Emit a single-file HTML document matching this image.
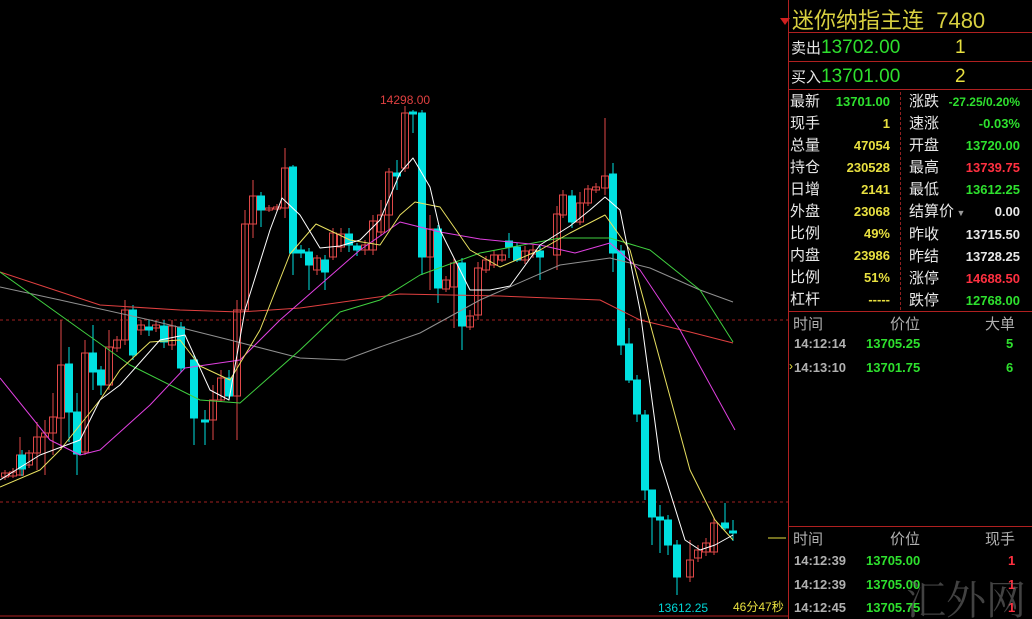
<!DOCTYPE html>
<html><head><meta charset="utf-8"><style>
html,body{margin:0;width:1032px;height:619px;background:#000;overflow:hidden}
body{position:relative;font-family:"Liberation Sans","Noto Sans CJK SC",sans-serif}
.t{position:absolute;white-space:nowrap}
.p{position:absolute;left:788px;right:0;border-left:1px solid #b02020}
.hl{position:absolute;left:789px;right:0;height:1px;background:#b02020}
.lab{color:#e8e8e8;font-size:15px}
.g{color:#2ee02e}.y{color:#e8e040}.r{color:#ff3040}.w{color:#e8e8e8}.gr{color:#b0b0b0}
.n{font-size:13px;font-weight:bold}
</style></head><body>
<svg width="788" height="619" style="position:absolute;left:0;top:0">
<line x1="0" y1="320" x2="788" y2="320" stroke="#a02020" stroke-dasharray="3,3"/>
<line x1="0" y1="502" x2="788" y2="502" stroke="#a02020" stroke-dasharray="3,3"/>
<line x1="0" y1="616" x2="788" y2="616" stroke="#b02020"/>
<line x1="768" y1="538" x2="786" y2="538" stroke="#e8e040"/>
<g stroke="#e04848" fill="none" stroke-width="1">
<path d="M5 470V480M13 468V478M20 437V476M29 450V468M37 422V470M45 420V475M53 393V455M61 320V450M85 340V455M109 330V390M117 336V352M125 300V345M141 320V335M156 320V332M172 320V350M213 385V440M221 370V402M237 300V440M245 210V312M253 180V238M269 205V212M277 204V211M285 148V218M317 255V275M333 228V260M341 228V252M365 240V255M373 215V255M381 200V236M389 168V230M405 106V172M430 215V290M446 276V292M454 258V328M470 310V330M478 262V320M486 256V273M494 250V268M502 250V262M525 246V264M533 245V258M557 206V270M563 190V218M580 192V225M588 185V206M596 183V193M605 118V195M690 540V582M698 545V562M706 538V556M714 518V555"/>
<rect x="1.5" y="473" width="7" height="4"/><rect x="9.5" y="472" width="7" height="4"/><rect x="16.5" y="455" width="7" height="20"/><rect x="25.5" y="453" width="7" height="12"/><rect x="33.5" y="437" width="7" height="16"/><rect x="41.5" y="433" width="7" height="4"/><rect x="49.5" y="417" width="7" height="16"/><rect x="57.5" y="365" width="7" height="53"/><rect x="81.5" y="353" width="7" height="99"/><rect x="105.5" y="347" width="7" height="38"/><rect x="113.5" y="340" width="7" height="8"/><rect x="121.5" y="310" width="7" height="30"/><rect x="137.5" y="325" width="7" height="5"/><rect x="152.5" y="325" width="7" height="3"/><rect x="168.5" y="326" width="7" height="19"/><rect x="209.5" y="400" width="7" height="20"/><rect x="217.5" y="378" width="7" height="22"/><rect x="233.5" y="310" width="7" height="86"/><rect x="241.5" y="224" width="7" height="86"/><rect x="249.5" y="196" width="7" height="28"/><rect x="265.5" y="208" width="7" height="2"/><rect x="273.5" y="207" width="7" height="2"/><rect x="281.5" y="168" width="7" height="40"/><rect x="313.5" y="258" width="7" height="12"/><rect x="329.5" y="233" width="7" height="24"/><rect x="337.5" y="234" width="7" height="13"/><rect x="361.5" y="245" width="7" height="5"/><rect x="369.5" y="221" width="7" height="29"/><rect x="377.5" y="215" width="7" height="17"/><rect x="385.5" y="172" width="7" height="43"/><rect x="401.5" y="113" width="7" height="55"/><rect x="426.5" y="229" width="7" height="28"/><rect x="442.5" y="280" width="7" height="9"/><rect x="450.5" y="263" width="7" height="24"/><rect x="466.5" y="316" width="7" height="11"/><rect x="474.5" y="268" width="7" height="47"/><rect x="482.5" y="260" width="7" height="10"/><rect x="490.5" y="255" width="7" height="10"/><rect x="498.5" y="255" width="7" height="5"/><rect x="521.5" y="251" width="7" height="9"/><rect x="529.5" y="250" width="7" height="4"/><rect x="553.5" y="214" width="7" height="41"/><rect x="559.5" y="195" width="7" height="20"/><rect x="576.5" y="203" width="7" height="19"/><rect x="584.5" y="189" width="7" height="14"/><rect x="592.5" y="187" width="7" height="3"/><rect x="601.5" y="176" width="7" height="12"/><rect x="686.5" y="560" width="7" height="17"/><rect x="694.5" y="550" width="7" height="8"/><rect x="702.5" y="543" width="7" height="9"/><rect x="710.5" y="523" width="7" height="29"/>
</g>
<g stroke="#00e0e0" fill="#00e0e0">
<path d="M22 450V476M69 347V442M77 393V475M93 325V390M101 366V395M133 305V360M149 320V336M164 320V348M181 322V372M194 355V445M205 410V445M229 370V400M261 192V227M293 165V275M301 245V258M309 248V290M325 255V290M349 228V252M357 243V256M397 160V190M413 110V133M422 110V275M438 225V303M462 258V350M509 233V258M517 243V262M540 246V280M572 190V228M613 163V272M621 245V355M629 328V383M637 375V422M645 410V500M652 505V545M660 505V553M668 515V555M677 540V595M725 503V530M733 520V541"/>
<rect x="18.5" y="455" width="7" height="14"/><rect x="65.5" y="364" width="7" height="48"/><rect x="73.5" y="412" width="7" height="42"/><rect x="89.5" y="353" width="7" height="19"/><rect x="97.5" y="370" width="7" height="15"/><rect x="129.5" y="310" width="7" height="45"/><rect x="145.5" y="327" width="7" height="3"/><rect x="160.5" y="326" width="7" height="16"/><rect x="177.5" y="327" width="7" height="41"/><rect x="190.5" y="360" width="7" height="58"/><rect x="201.5" y="420" width="7" height="2"/><rect x="225.5" y="378" width="7" height="18"/><rect x="257.5" y="196" width="7" height="14"/><rect x="289.5" y="167" width="7" height="86"/><rect x="297.5" y="250" width="7" height="3"/><rect x="305.5" y="252" width="7" height="13"/><rect x="321.5" y="260" width="7" height="12"/><rect x="345.5" y="234" width="7" height="11"/><rect x="353.5" y="246" width="7" height="4"/><rect x="393.5" y="173" width="7" height="3"/><rect x="409.5" y="112" width="7" height="2"/><rect x="418.5" y="113" width="7" height="144"/><rect x="434.5" y="229" width="7" height="59"/><rect x="458.5" y="263" width="7" height="63"/><rect x="505.5" y="241" width="7" height="6"/><rect x="513.5" y="247" width="7" height="13"/><rect x="536.5" y="251" width="7" height="6"/><rect x="568.5" y="196" width="7" height="26"/><rect x="609.5" y="174" width="7" height="79"/><rect x="617.5" y="251" width="7" height="94"/><rect x="625.5" y="344" width="7" height="36"/><rect x="633.5" y="380" width="7" height="34"/><rect x="641.5" y="415" width="7" height="75"/><rect x="648.5" y="490" width="7" height="27"/><rect x="656.5" y="517" width="7" height="3"/><rect x="664.5" y="520" width="7" height="25"/><rect x="673.5" y="545" width="7" height="32"/><rect x="721.5" y="523" width="7" height="5"/><rect x="729.5" y="531" width="7" height="2"/>
</g>
<g fill="none" stroke-width="1" stroke-linejoin="round">
<polyline stroke="#e04040" points="0,272 100,305 180,310 240,312 300,308 400,294 500,296 600,300 640,320 690,332 733,343"/>
<polyline stroke="#909090" points="0,287 60,300 150,320 230,340 300,358 345,360 380,347 420,333 480,300 560,265 610,258 650,268 700,290 733,302"/>
<polyline stroke="#40d040" points="0,272 60,315 130,365 200,400 240,403 300,350 340,312 380,300 420,275 480,253 560,238 610,238 650,250 700,290 733,342"/>
<polyline stroke="#e040e0" points="0,378 50,440 80,455 100,450 150,405 185,368 240,360 280,320 320,285 360,250 400,222 440,232 480,239 540,245 575,253 610,243 640,270 680,330 735,430"/>
<polyline stroke="#e8e060" points="0,487 40,470 60,450 100,400 120,370 150,342 180,340 200,366 230,380 260,330 290,254 316,224 350,240 380,245 400,215 415,202 440,207 470,250 500,267 540,250 570,233 605,215 630,250 660,360 690,470 715,520 733,540"/>
<polyline stroke="#ffffff" points="0,480 40,455 80,440 100,400 120,385 160,340 185,335 210,390 229,400 245,310 270,230 282,198 300,215 320,248 340,246 360,240 380,220 400,173 413,158 430,187 440,230 470,290 490,290 510,286 540,245 570,226 590,210 605,197 620,210 640,310 660,460 685,540 700,550 715,545 733,535"/>
</g>
<text x="380" y="104" fill="#e04040" font-size="12" font-family="Liberation Sans">14298.00</text>
<text x="658" y="612" fill="#00d8d8" font-size="12" font-family="Liberation Sans">13612.25</text>
<text x="733" y="611" fill="#e8e040" font-size="12" font-family="Liberation Sans,Noto Sans CJK SC">46分47秒</text>
</svg>
<div class="p" style="top:0;bottom:0"></div>
<div style="position:absolute;left:780px;top:18px;width:0;height:0;border-left:5px solid transparent;border-right:5px solid transparent;border-top:7px solid #d02020"></div>
<div class="t" style="left:792px;top:3px;font-size:22px;color:#d8d040">迷你纳指主连 &nbsp;7480</div>
<div class="hl" style="top:32px"></div>
<div class="t lab" style="left:791px;top:37px">卖出<span class="g" style="font-size:19px">13702.00</span></div>
<div class="t y" style="left:955px;top:37px;font-size:19px">1</div>
<div class="hl" style="top:61px"></div>
<div class="t lab" style="left:791px;top:66px">买入<span class="g" style="font-size:19px">13701.00</span></div>
<div class="t y" style="left:955px;top:66px;font-size:19px">2</div>
<div class="hl" style="top:89px"></div>
<div style="position:absolute;left:900px;top:92px;height:218px;border-left:1px dashed #902020"></div>
<div style="position:absolute;left:790px;top:91px;width:240px;font-size:15px;line-height:22px">
<div style="position:absolute;left:0;top:0;width:100px">
<div class="w">最新<span class="n g" style="float:right">13701.00</span></div>
<div class="w">现手<span class="n y" style="float:right">1</span></div>
<div class="w">总量<span class="n y" style="float:right">47054</span></div>
<div class="w">持仓<span class="n y" style="float:right">230528</span></div>
<div class="w">日增<span class="n y" style="float:right">2141</span></div>
<div class="w">外盘<span class="n y" style="float:right">23068</span></div>
<div class="w">比例<span class="n y" style="float:right">49%</span></div>
<div class="w">内盘<span class="n y" style="float:right">23986</span></div>
<div class="w">比例<span class="n y" style="float:right">51%</span></div>
<div class="w">杠杆<span class="n y" style="float:right">-----</span></div>
</div>
<div style="position:absolute;left:119px;top:0;width:111px">
<div class="w">涨跌<span class="n g" style="float:right;font-size:12px">-27.25/0.20%</span></div>
<div class="w">速涨<span class="n g" style="float:right">-0.03%</span></div>
<div class="w">开盘<span class="n g" style="float:right">13720.00</span></div>
<div class="w">最高<span class="n r" style="float:right">13739.75</span></div>
<div class="w">最低<span class="n g" style="float:right">13612.25</span></div>
<div class="w">结算价<span style="color:#999;font-size:9px"> ▼</span><span class="n w" style="float:right">0.00</span></div>
<div class="w">昨收<span class="n w" style="float:right">13715.50</span></div>
<div class="w">昨结<span class="n w" style="float:right">13728.25</span></div>
<div class="w">涨停<span class="n r" style="float:right">14688.50</span></div>
<div class="w">跌停<span class="n g" style="float:right">12768.00</span></div>
</div>
</div>
<div class="hl" style="top:311px"></div>
<div class="t gr" style="left:793px;top:313px;font-size:15px">时间</div>
<div class="t gr" style="left:890px;top:313px;font-size:15px">价位</div>
<div class="t gr" style="left:985px;top:313px;font-size:15px">大单</div>
<div class="t n gr" style="left:794px;top:336px">14:12:14</div><div class="t n g" style="left:866px;top:336px">13705.25</div><div class="t n g" style="left:1006px;top:336px">5</div>
<div class="t y" style="left:789px;top:359px;font-size:12px">›</div>
<div class="t n gr" style="left:794px;top:360px">14:13:10</div><div class="t n g" style="left:866px;top:360px">13701.75</div><div class="t n g" style="left:1006px;top:360px">6</div>
<div class="hl" style="top:526px"></div>
<div class="t gr" style="left:793px;top:528px;font-size:15px">时间</div>
<div class="t gr" style="left:890px;top:528px;font-size:15px">价位</div>
<div class="t gr" style="left:985px;top:528px;font-size:15px">现手</div>
<div class="t n gr" style="left:794px;top:553px">14:12:39</div><div class="t n g" style="left:866px;top:553px">13705.00</div><div class="t n r" style="left:1008px;top:553px">1</div>
<div class="t n gr" style="left:794px;top:577px">14:12:39</div><div class="t n g" style="left:866px;top:577px">13705.00</div><div class="t n r" style="left:1008px;top:577px">1</div>
<div class="t n gr" style="left:794px;top:600px">14:12:45</div><div class="t n g" style="left:866px;top:600px">13705.75</div><div class="t n r" style="left:1008px;top:600px">1</div>
<div class="t" style="left:906px;top:576px;font-size:40px;line-height:44px;color:rgba(110,110,110,0.6);font-family:'Noto Serif CJK SC',serif">汇外网</div>
</body></html>
